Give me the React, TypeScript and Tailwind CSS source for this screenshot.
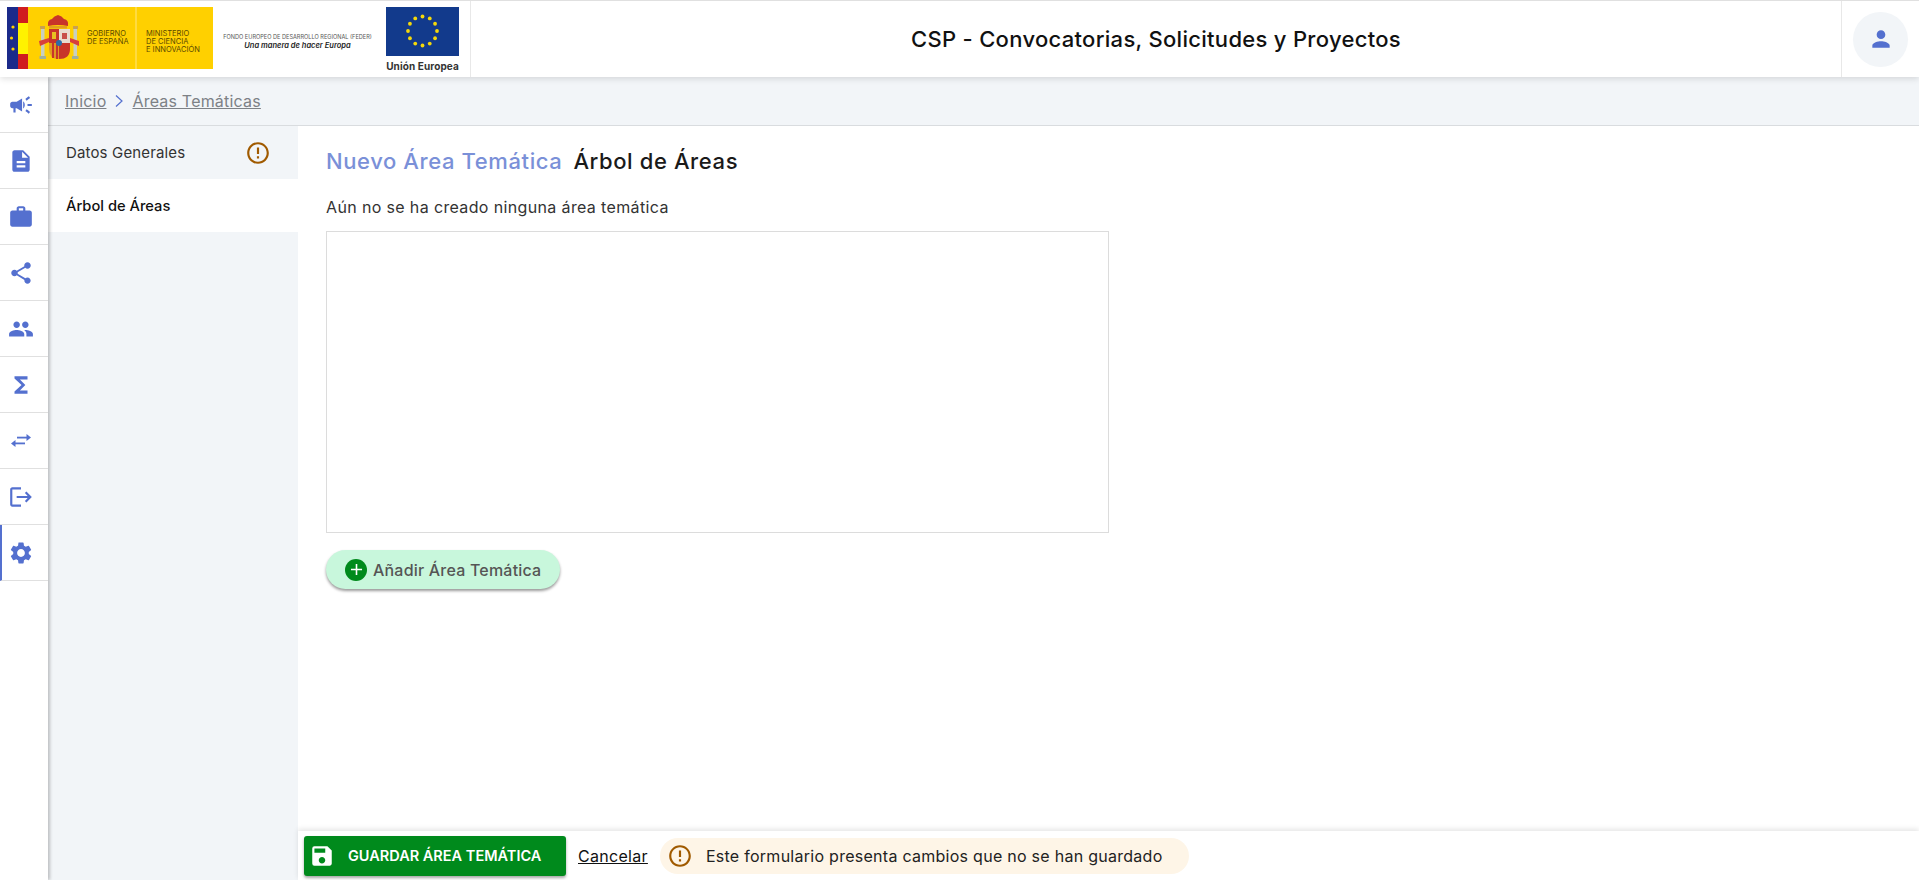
import {
  MdCampaign,
  MdDescription,
  MdWork,
  MdShare,
  MdPeople,
  MdFunctions,
  MdLogout,
  MdSettings,
  MdSave,
  MdPerson,
  MdAdd,
  MdErrorOutline,
} from "react-icons/md";

function ArrowsIcon({ className }: { className?: string }) {
  return (
    <svg width="26" height="26" viewBox="0 0 26 26" className={className} fill="currentColor">
      <rect x="9" y="8.700" width="11" height="1.800" />
      <path d="M18.500 6 L23 9.600 L18.500 13 Z" />
      <rect x="6" y="14.500" width="11" height="1.800" />
      <path d="M7.500 12 L3 15.400 L7.500 19 Z" />
    </svg>
  );
}

const navIcons = [MdCampaign, MdDescription, MdWork, MdShare, MdPeople, MdFunctions, ArrowsIcon, MdLogout, MdSettings];

function SpainLogo() {
  const font = "Inter, sans-serif";
  return (
    <svg width="206" height="62" viewBox="0 0 206 62" className="shrink-0">
      <rect width="206" height="62" fill="#ffd000" />
      <rect width="11" height="62" fill="#1b2a8a" />
      <rect x="11" width="10" height="16" fill="#d01c1f" />
      <rect x="11" y="16" width="10" height="31" fill="#fff200" />
      <rect x="11" y="47" width="10" height="15" fill="#d01c1f" />
      <circle cx="6" cy="20" r="1.600" fill="#ffd000" />
      <circle cx="4.500" cy="31" r="1.600" fill="#ffd000" />
      <circle cx="6" cy="42" r="1.600" fill="#ffd000" />
      <rect x="128.500" width="1" height="62" fill="#ffe680" />
      {/* escudo */}
      <path d="M41 19 q-1 -6 4 -7 q2 -3 6 -4 q4 1 6 4 q5 1 4 7 q-10 -2 -20 0 z" fill="#c8342a" />
      <rect x="42" y="19" width="18" height="2.500" fill="#e0a020" />
      <rect x="33" y="19" width="5" height="3" fill="#c9a050" />
      <rect x="34" y="22" width="3.500" height="27" fill="#c8cfc0" />
      <rect x="32.500" y="49" width="6.500" height="3" fill="#9fb09a" />
      <rect x="66" y="19" width="5" height="3" fill="#c9a050" />
      <rect x="66.500" y="22" width="3.500" height="27" fill="#c8cfc0" />
      <rect x="65" y="49" width="6.500" height="3" fill="#9fb09a" />
      <path d="M42 22 h10 v14 h-10 z" fill="#c8342a" />
      <rect x="45" y="25" width="4" height="7" fill="#e8c020" />
      <path d="M52 22 h11 v14 h-11 z" fill="#e8dcd0" />
      <path d="M55 26 h5 v6 h-5 z" fill="#c8504a" />
      <path d="M42 36 h10 v16 q-10 0 -10 -10 z" fill="#e09a20" />
      <path d="M45 36 h2 v15 h-2 z M49 36 h2 v16 h-2 z" fill="#c8342a" />
      <path d="M52 36 h11 v6 q0 10 -11 10 z" fill="#c8342a" />
      <path d="M32 34 l10 -3 v4 l-9 4 z M72 34 l-9 -3 v4 l9 4 z" fill="#d8403a" />
      <circle cx="52" cy="36" r="3" fill="#2b6ca8" />
      <text x="80" y="29" fontSize="7.500" fill="#5a4a00" fontFamily={font}>GOBIERNO</text>
      <text x="80" y="37" fontSize="7.500" fill="#5a4a00" fontFamily={font}>DE ESPAÑA</text>
      <text x="139" y="29" fontSize="7.500" fill="#5a4a00" fontFamily={font}>MINISTERIO</text>
      <text x="139" y="37" fontSize="7.500" fill="#5a4a00" fontFamily={font}>DE CIENCIA</text>
      <text x="139" y="45" fontSize="7.500" fill="#5a4a00" fontFamily={font}>E INNOVACIÓN</text>
    </svg>
  );
}

function EuFlag() {
  const stars = Array.from({ length: 12 }, (_, i) => {
    const a = (i * Math.PI) / 6;
    return { x: 36.500 + 14.500 * Math.sin(a), y: 24 - 14.500 * Math.cos(a) };
  });
  return (
    <svg width="73" height="49" viewBox="0 0 73 49">
      <rect width="73" height="49" fill="#123a8c" />
      {stars.map((s, i) => (
        <circle key={i} cx={s.x} cy={s.y} r="1.900" fill="#f5d90a" />
      ))}
    </svg>
  );
}

export default function App() {
  return (
    <div className="h-screen flex flex-col overflow-hidden bg-white font-['Inter',sans-serif]">
      {/* cabecera */}
      <header className="relative z-20 h-[77px] shrink-0 flex border-t border-[#e0e0e0] bg-white shadow-[0_2px_6px_rgba(0,0,0,0.12)]">
        <div className="w-[471px] shrink-0 flex border-r border-[#e8e8e8] pl-[7px] pt-[6px]">
          <SpainLogo />
          <div className="w-[173px] shrink-0 flex flex-col items-center pt-[26px] pr-[4px] text-[#555]">
            <span className="text-[5.600px] leading-[8px] whitespace-nowrap">FONDO EUROPEO DE DESARROLLO REGIONAL (FEDER)</span>
            <span className="text-[7.500px] leading-[10px] italic font-semibold whitespace-nowrap text-[#222]">Una manera de hacer Europa</span>
          </div>
          <div className="flex flex-col items-center">
            <EuFlag />
            <span className="mt-[3px] text-[10px] leading-[14px] font-bold text-[#333] whitespace-nowrap tracking-[0.1px]">Unión Europea</span>
          </div>
        </div>
        <h1 className="flex-1 flex items-center justify-center text-[22px] tracking-[0.3px] font-medium text-[#111]">
          CSP - Convocatorias, Solicitudes y Proyectos
        </h1>
        <div className="w-[78px] shrink-0 flex items-center justify-center border-l border-[#e8e8e8]">
          <div className="w-[55px] h-[55px] rounded-full bg-[#f2f5f8] flex items-center justify-center">
            <MdPerson className="text-[26px] text-[#5470cf]" />
          </div>
        </div>
      </header>

      <div className="flex-1 flex min-h-0">
        {/* menu lateral */}
        <nav className="relative z-10 w-12 shrink-0 bg-white shadow-[2px_0_3px_rgba(0,0,0,0.22)]">
          {navIcons.map((Icon, i) => (
            <div
              key={i}
              className={`h-[56px] flex items-center justify-center border-b border-[#e0e0e0] text-[#5470cf] ${i === 8 ? "pr-[8px] border-l-2 border-l-[#5470cf]" : "pr-[6px]"}`}
            >
              <Icon className="text-[26px]" />
            </div>
          ))}
        </nav>

        <div className="flex-1 flex flex-col min-w-0">
          <div className="h-[49px] shrink-0 flex items-center gap-[8px] pl-[17px] bg-[#f2f5f8] border-b border-[#d9dcdf] text-[16px] tracking-[0.2px] text-[#7d8186]">
            <span className="underline">Inicio</span>
            <svg width="10" height="14" viewBox="0 0 10 14" fill="none" stroke="#5470cf" strokeWidth="1.200">
              <path d="M2 1.500 L8 7 L2 12.500" />
            </svg>
            <span className="underline">Áreas Temáticas</span>
          </div>

          <div className="flex-1 flex min-h-0">
            <aside className="w-[250px] shrink-0 bg-[#f2f5f8]">
              <div className="h-[53px] flex items-center justify-between pl-[18px] pr-[27px] text-[15px] tracking-[0.15px] text-[#333]">
                <span className="pt-[1px]">Datos Generales</span>
                <MdErrorOutline className="text-[26px] text-[#a05a00]" />
              </div>
              <div className="h-[53px] flex items-center pl-[18px] pt-[1px] bg-white text-[14.700px] font-medium text-[#111]">
                Árbol de Áreas
              </div>
            </aside>

            <div className="flex-1 flex flex-col min-w-0">
              <main className="flex-1 pl-[28px] pt-[19px]">
                <div className="flex items-baseline gap-[11px] text-[22px] tracking-[0.6px] leading-[32px] font-medium">
                  <span className="text-[#7a90d8]">Nuevo Área Temática</span>
                  <span className="text-[#1a1a1a]">Árbol de Áreas</span>
                </div>
                <p className="mt-[19px] text-[16px] tracking-[0.36px] leading-[22px] text-[#333]">Aún no se ha creado ninguna área temática</p>
                <div className="mt-[13px] w-[783px] h-[302px] border border-[#dcdcdc]" />
                <button className="mt-[17px] h-[39px] w-[234px] flex items-center gap-[6px] pl-[19px] rounded-full bg-[#c8f7dc] text-[16px] tracking-[0.2px] font-medium text-[#555] shadow-[0_2px_3px_rgba(0,0,0,0.4)]">
                  <span className="w-[22px] h-[22px] rounded-full bg-[#008a1c] flex items-center justify-center">
                    <MdAdd className="text-[19px] text-white" />
                  </span>
                  Añadir Área Temática
                </button>
              </main>

              <footer className="h-[49px] shrink-0 flex items-center pl-[6px] bg-white shadow-[0_-2px_5px_rgba(0,0,0,0.1)]">
                <button className="h-[40px] w-[262px] flex items-center gap-[13px] pl-[5px] rounded-[3px] bg-[#008a1c] text-[14.500px] font-semibold text-white shadow-[0_2px_3px_rgba(0,0,0,0.35)]">
                  <MdSave className="text-[26px]" />
                  GUARDAR ÁREA TEMÁTICA
                </button>
                <span className="ml-[12px] text-[16px] tracking-[0.3px] underline text-[#111]">Cancelar</span>
                <div className="ml-[12px] h-[36px] w-[529px] flex items-center gap-[13px] pl-[7px] rounded-full bg-[#fef5e7] text-[16px] tracking-[0.27px] text-[#222]">
                  <MdErrorOutline className="text-[26px] text-[#a05a00]" />
                  Este formulario presenta cambios que no se han guardado
                </div>
              </footer>
            </div>
          </div>
        </div>
      </div>
    </div>
  );
}
